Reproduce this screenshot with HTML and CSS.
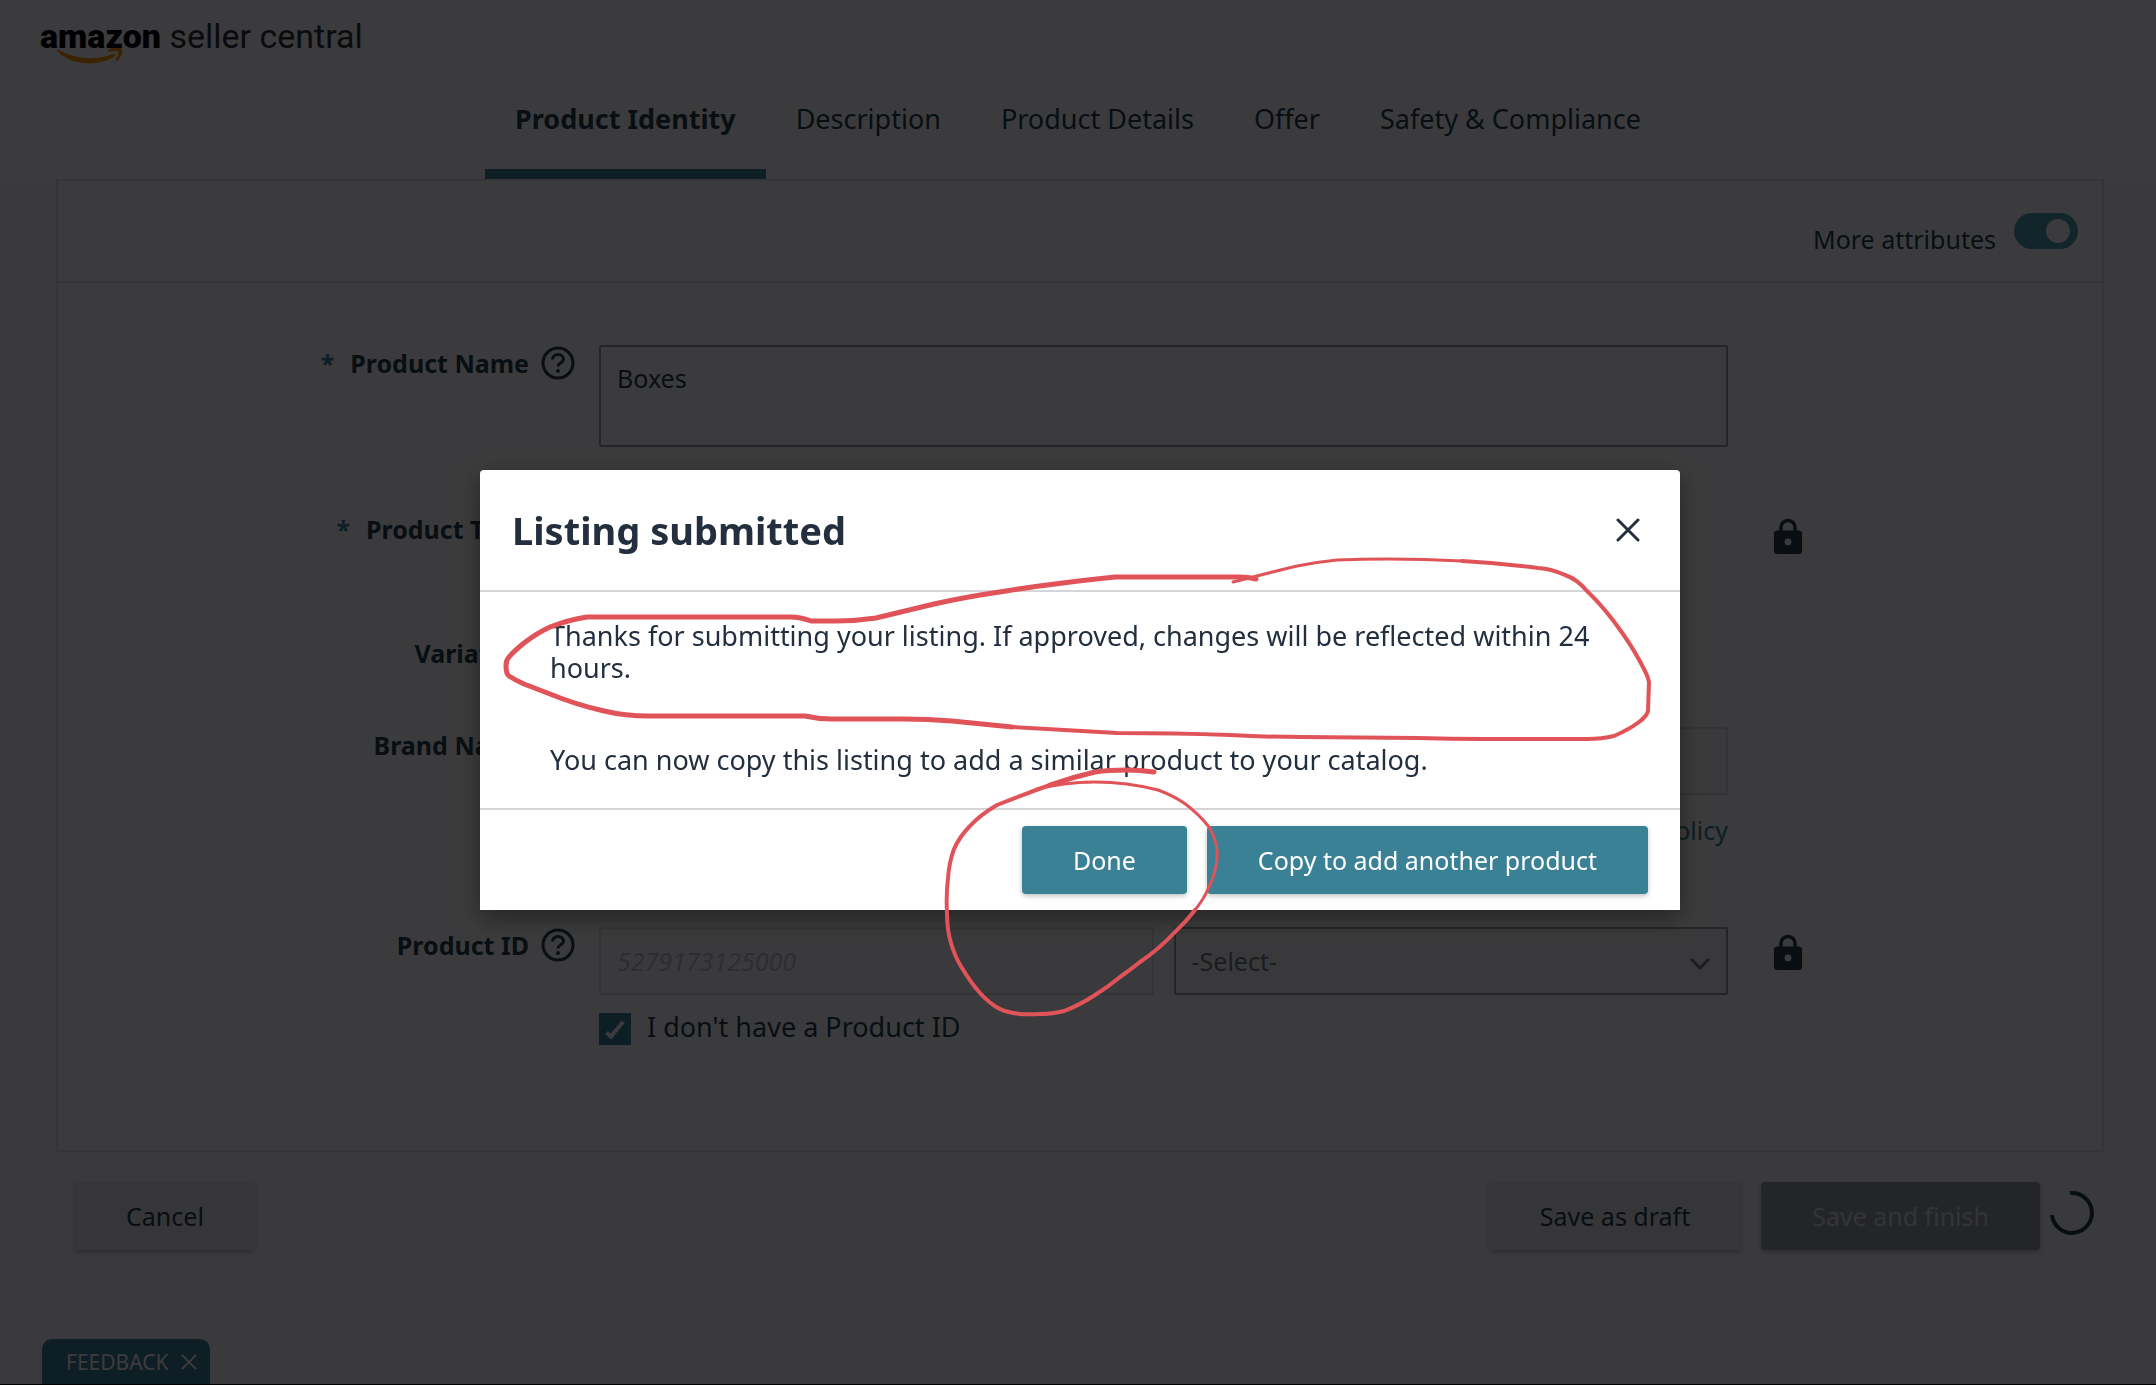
FILE: index.html
```html
<!DOCTYPE html>
<html lang="en">
<head>
    <meta charset="UTF-8">
    <meta name="viewport" content="width=device-width, initial-scale=1.0">
    <title>Amazon Seller Central</title>
    <link rel="stylesheet" href="styles.css">
</head>
<body>
    <!-- Shared icons -->
    <svg class="sprite" aria-hidden="true">
        <symbol id="icon-help" viewBox="0 0 34 34">
            <circle cx="17" cy="17" r="15" fill="none" stroke="currentColor" stroke-width="3"/>
            <path d="M11.500 13.500c0-3 2.500-5 5.500-5s5.500 2 5.500 4.700c0 3.500-5.500 3.800-5.500 7.300" fill="none" stroke="currentColor" stroke-width="3"/>
            <circle cx="17" cy="25" r="2" fill="currentColor"/>
        </symbol>
        <symbol id="icon-lock" viewBox="0 0 28 36">
            <path d="M7 14V9.500a7 7 0 0 1 14 0V14" fill="none" stroke="currentColor" stroke-width="3.500"/>
            <path fill="currentColor" fill-rule="evenodd" d="M3 12.500h22a3 3 0 0 1 3 3V33a3 3 0 0 1-3 3H3a3 3 0 0 1-3-3V15.500a3 3 0 0 1 3-3zM14 20.500a3.400 3.400 0 1 0 0 6.800a3.400 3.400 0 0 0 0-6.800z"/>
        </symbol>
        <symbol id="icon-close" viewBox="0 0 24 24">
            <path d="M2 2L22 22M22 2L2 22" fill="none" stroke="currentColor" stroke-width="3" stroke-linecap="round"/>
        </symbol>
    </svg>

    <header class="header">
        <a class="logo" href="#">
            <span class="logo-text"><b>amazon</b> seller central</span>
            <svg class="logo-smile" viewBox="0 0 66 16" aria-hidden="true">
                <path fill="#ff9900" d="M0 1C16 11 38 13 56 6c2-1 3 1 2 2C42 19 14 18 0 3c-1-1-1-3 0-2z"/>
                <path fill="#ff9900" d="M51 2c4-3 13-3 14-1c1 3-1 9-5 12c-1 1-2 0-1-2c1-2 3-5 2-7c-1-1-5-1-8 0c-2 0-3-1-2-2z"/>
            </svg>
        </a>
    </header>

    <nav class="tabs">
        <a class="tab active" href="#">Product Identity</a>
        <a class="tab" href="#">Description</a>
        <a class="tab" href="#">Product Details</a>
        <a class="tab" href="#">Offer</a>
        <a class="tab" href="#">Safety &amp; Compliance</a>
    </nav>

    <main class="content">
        <form class="card">
            <div class="card-header">
                <label for="more-attributes">More attributes</label>
                <input class="toggle" type="checkbox" role="switch" id="more-attributes" checked>
            </div>

            <div class="form-rows">
                <div class="form-row">
                    <div class="form-label">
                        <span class="required">*</span>
                        <label for="product-name">Product Name</label>
                        <svg class="help"><use href="#icon-help"/></svg>
                    </div>
                    <textarea class="field name-field" id="product-name">Boxes</textarea>
                </div>

                <div class="form-row">
                    <div class="form-label">
                        <span class="required">*</span>
                        <label for="product-type">Product Type</label>
                        <svg class="help"><use href="#icon-help"/></svg>
                    </div>
                    <div class="type-field">
                        <input class="field disabled" type="text" id="product-type" disabled>
                    </div>
                    <svg class="lock"><use href="#icon-lock"/></svg>
                </div>

                <div class="form-row">
                    <div class="form-label">
                        <span>Variation</span>
                        <svg class="help"><use href="#icon-help"/></svg>
                    </div>
                </div>

                <div class="form-row">
                    <div class="form-label">
                        <label for="brand-name">Brand Name</label>
                        <svg class="help"><use href="#icon-help"/></svg>
                    </div>
                    <div class="brand">
                        <input class="field disabled" type="text" id="brand-name" disabled>
                        <a class="policy" href="#">Brand Name Policy</a>
                    </div>
                </div>

                <div class="form-row">
                    <div class="form-label">
                        <label for="product-id">Product ID</label>
                        <svg class="help"><use href="#icon-help"/></svg>
                    </div>
                    <div class="product-id">
                        <div class="id-fields">
                            <input class="field disabled" type="text" id="product-id" placeholder="5279173125000" disabled>
                            <div class="select-wrap">
                                <select class="field" aria-label="Product ID type">
                                    <option>-Select-</option>
                                </select>
                                <svg class="chevron" viewBox="0 0 20 12" aria-hidden="true">
                                    <path d="M1 1L10 10L19 1" fill="none" stroke="currentColor" stroke-width="3"/>
                                </svg>
                            </div>
                        </div>
                        <div class="no-id">
                            <input class="checkbox" type="checkbox" id="no-product-id" checked>
                            <label for="no-product-id">I don't have a Product ID</label>
                        </div>
                    </div>
                    <svg class="lock"><use href="#icon-lock"/></svg>
                </div>
            </div>
        </form>

        <div class="actions">
            <button class="button secondary" type="button">Cancel</button>
            <button class="button secondary draft" type="button">Save as draft</button>
            <button class="button muted" type="button" disabled>Save and finish</button>
            <svg class="spinner" viewBox="0 0 44 44" aria-hidden="true">
                <path d="M20 2A20 20 0 1 1 2 24" fill="none" stroke="currentColor" stroke-width="4"/>
            </svg>
        </div>
    </main>

    <button class="feedback" type="button">
        FEEDBACK
        <svg><use href="#icon-close"/></svg>
    </button>

    <div class="overlay">
        <section class="modal" role="dialog" aria-labelledby="modal-title">
            <div class="modal-header">
                <h2 id="modal-title">Listing submitted</h2>
                <button class="close" type="button" aria-label="Close">
                    <svg><use href="#icon-close"/></svg>
                </button>
            </div>
            <div class="modal-body">
                <p>Thanks for submitting your listing. If approved, changes will be reflected within 24 hours.</p>
                <p>You can now copy this listing to add a similar product to your catalog.</p>
            </div>
            <div class="modal-footer">
                <button class="button primary" type="button">Done</button>
                <button class="button primary" type="button">Copy to add another product</button>
            </div>

            <!-- Hand-drawn marks round the message and the Done button -->
            <svg class="marks" viewBox="480 470 1200 440" aria-hidden="true">
                <path class="thick" d="M1256 579Q1248 577 1240 577L1115 577Q1085 580 1055 584Q1030 587 1006 591Q965 597 934 604Q905 611 876 618Q856 621 836 621L811 621Q800 617 791 617L587 617Q568 620 550 627Q537 633 524 643Q513 652 509 657Q506 660 506 666Q506 674 509 676Q515 680 524 684Q537 689 550 694Q577 705 604 711Q625 716 649 716L805 716Q818 719 832 719L903 719Q928 719 952 721Q982 724 1012 727"/>
                <path class="medium" d="M1012 727Q1065 730 1117 733Q1175 733 1230 735Q1266 737 1302 737L1418 738Q1450 739 1485 739L1587 739Q1602 739 1614 736Q1630 729 1639 722Q1647 716 1648 711L1649 682Q1648 677 1645 671Q1635 651 1623 634Q1605 608 1587 591Q1577 579 1565 575Q1552 569 1538 568Q1500 563 1462 561"/>
                <path class="thin" d="M1462 561Q1425 559 1387 559Q1362 559 1337 560Q1317 562 1297 566Q1276 571 1253 577L1233 582"/>
                <path class="thick" d="M1154 772Q1140 770 1126 770Q1109 770 1095 772Q1073 777 1050 785"/>
                <path class="medium" d="M1050 785Q1022 795 997 805Q980 815 970 826Q960 836 954 849Q949 863 948 878Q946 895 947 913Q947 930 951 943Q955 957 962 968Q971 983 980 993Q989 1003 998 1008Q1005 1012 1013 1013Q1026 1015 1039 1014Q1053 1014 1064 1011Q1080 1005 1095 995Q1108 987 1120 977Q1130 970 1140 962Q1158 950 1174 933Q1186 922 1195 910"/>
                <path class="thin" d="M1195 910Q1204 899 1209 887Q1215 875 1217 860Q1219 844 1209 827Q1199 814 1184 803Q1172 795 1158 790Q1127 782 1095 782Q1079 782 1064 784Q1050 786 1037 789"/>
            </svg>
        </section>
    </div>
</body>
</html>
```

FILE: styles.css
```css
* {
    box-sizing: border-box;
}
body {
    margin: 0;
    min-height: 100vh;
    font-family: "Noto Sans", sans-serif;
    font-size: 25px;
    line-height: 36px;
    color: #233f48;
    background-color: #fafafa;
}
input, textarea, select, button {
    font: inherit;
    color: inherit;
}
.sprite {
    position: absolute;
    width: 0;
    height: 0;
}

/* Header */
.header {
    padding: 12px 40px 0;
    background-color: #fff;
}
.logo {
    display: block;
    position: relative;
    height: 76px;
    color: #303030;
    text-decoration: none;
}
.logo-text {
    font-family: Roboto, sans-serif;
    font-size: 34px;
    line-height: 48px;
}
.logo-text b {
    font-weight: 900;
    color: #000;
}
.logo-smile {
    position: absolute;
    left: 17px;
    top: 36px;
    width: 66px;
    height: 16px;
}
.tabs {
    display: flex;
    justify-content: center;
    background-color: #fff;
}
.tab {
    padding: 13px 30px 32px;
    border-bottom: 10px solid transparent;
    font-size: 27px;
    color: inherit;
    text-decoration: none;
}
.tab.active {
    font-weight: bold;
    border-bottom-color: #3a8196;
}

/* Form card */
.content {
    padding: 0 52px 0 56px;
}
.card {
    border: 2px solid #e1e3e5;
    background-color: #fff;
}
.card-header {
    display: flex;
    justify-content: flex-end;
    gap: 18px;
    height: 102px;
    padding: 32px 24px 0;
    border-bottom: 2px solid #e1e3e5;
}
.card-header label {
    padding-top: 8px;
}
.toggle {
    appearance: none;
    width: 64px;
    height: 36px;
    margin: 0;
    padding: 6px 8px;
    border-radius: 18px;
    background-color: #4a9fae;
}
.toggle::before {
    content: "";
    display: block;
    width: 24px;
    height: 24px;
    margin-left: auto;
    border-radius: 50%;
    background-color: #fff;
}
.form-rows {
    display: flex;
    flex-direction: column;
    gap: 56px;
    padding: 62px 0 105px;
}
.form-row {
    display: grid;
    grid-template-columns: 519fr 1129fr 352fr;
    align-items: start;
    column-gap: 22px;
}
.form-row:first-child {
    margin-bottom: 8px;
}
.form-label {
    display: flex;
    justify-content: flex-end;
    align-items: center;
    padding-right: 2px;
    font-weight: bold;
}
.required {
    margin-right: 16px;
    color: #3a8196;
}
.help {
    width: 34px;
    height: 34px;
    margin-left: 12px;
}
.lock {
    width: 28px;
    height: 36px;
    margin: 7px 24px;
}
.field {
    display: block;
    width: 100%;
    height: 68px;
    padding: 0 16px;
    border: 2px solid #999fa5;
    border-radius: 2px;
    background-color: #fff;
}
.name-field {
    height: 102px;
    padding: 13px 16px;
    resize: none;
}
.field.disabled {
    border-color: #dfe1e3;
    background-color: #fafafa;
}
.field::placeholder {
    font-style: italic;
    color: #c3c5c8;
    opacity: 1;
}
.type-field {
    width: 50%;
}
.brand {
    display: flex;
    flex-direction: column;
    padding-bottom: 23px;
}
.policy {
    align-self: flex-end;
    padding-top: 17px;
    color: #3a8196;
    text-decoration: none;
}
.id-fields {
    display: grid;
    grid-template-columns: 1fr 1fr;
    gap: 20px;
}
.select-wrap {
    position: relative;
    color: #767b80;
}
.select-wrap .field {
    appearance: none;
    background-color: #f6f6f6;
}
.chevron {
    position: absolute;
    right: 18px;
    top: 31px;
    width: 20px;
    height: 12px;
}
.no-id {
    display: flex;
    align-items: center;
    gap: 16px;
    padding-top: 14px;
    font-size: 27px;
}
.checkbox {
    appearance: none;
    display: flex;
    width: 32px;
    height: 32px;
    margin: 4px 0 0;
    background-color: #3a8196;
}
.checkbox::before {
    content: "";
    width: 9px;
    height: 17px;
    margin: 5px 12px;
    border: solid #fff;
    border-width: 0 4px 4px 0;
    transform: rotate(40deg);
}

/* Buttons */
.actions {
    display: flex;
    padding: 30px 10px 0 19px;
}
.button {
    height: 68px;
    padding: 0 51px;
    border: none;
    border-radius: 4px;
    box-shadow: 0 2px 5px rgba(0,0,0,0.25);
    cursor: pointer;
}
.primary {
    color: #fff;
    background-color: #3a8196;
}
.secondary {
    background-color: #e9eaec;
}
.muted {
    margin-left: 20px;
    color: #dfe1e3;
    background-color: #97a2a4;
}
.draft {
    margin-left: auto;
}
.spinner {
    width: 44px;
    height: 44px;
    margin: 9px 0 0 10px;
}
.feedback {
    position: fixed;
    left: 42px;
    bottom: 0;
    display: flex;
    align-items: center;
    gap: 12px;
    height: 46px;
    padding: 0 13px 0 24px;
    border: none;
    border-radius: 10px 10px 0 0;
    font-size: 21px;
    color: #fff;
    background-color: #3a8196;
}
.feedback svg {
    width: 16px;
    height: 16px;
}

/* Modal */
.overlay {
    position: fixed;
    inset: 0;
    display: flex;
    justify-content: center;
    align-items: center;
    padding: 0 0 4px 4px;
    border-bottom: 1px solid #000;
    background-color: rgba(0,0,2,0.77);
}
.modal {
    position: relative;
    width: 1200px;
    border-radius: 4px 4px 0 0;
    color: #232f3e;
    background-color: #fff;
    box-shadow: 0 8px 24px rgba(0,0,0,0.4);
}
.modal-header {
    display: flex;
    justify-content: space-between;
    align-items: center;
    height: 122px;
    padding: 0 36px 0 32px;
    border-bottom: 2px solid #d5d6da;
}
.modal-header h2 {
    margin: 0;
    font-size: 38px;
    line-height: 48px;
}
.close {
    padding: 4px;
    border: none;
    background: none;
    cursor: pointer;
}
.close svg {
    display: block;
    width: 24px;
    height: 24px;
}
.modal-body {
    display: flex;
    flex-direction: column;
    gap: 60px;
    padding: 28px 70px 32px;
    font-size: 27px;
    line-height: 32px;
}
.modal-body p {
    margin: 0;
}
.modal-footer {
    display: flex;
    justify-content: flex-end;
    gap: 20px;
    padding: 16px 32px;
    border-top: 2px solid #d5d5d7;
}
.marks {
    position: absolute;
    left: 0;
    top: 0;
    width: 1200px;
    height: 440px;
    overflow: visible;
    pointer-events: none;
    fill: none;
    stroke: #e05358;
    stroke-linecap: round;
    stroke-linejoin: round;
}
.thick {
    stroke-width: 5;
}
.medium {
    stroke-width: 4;
}
.thin {
    stroke-width: 3;
}
```
